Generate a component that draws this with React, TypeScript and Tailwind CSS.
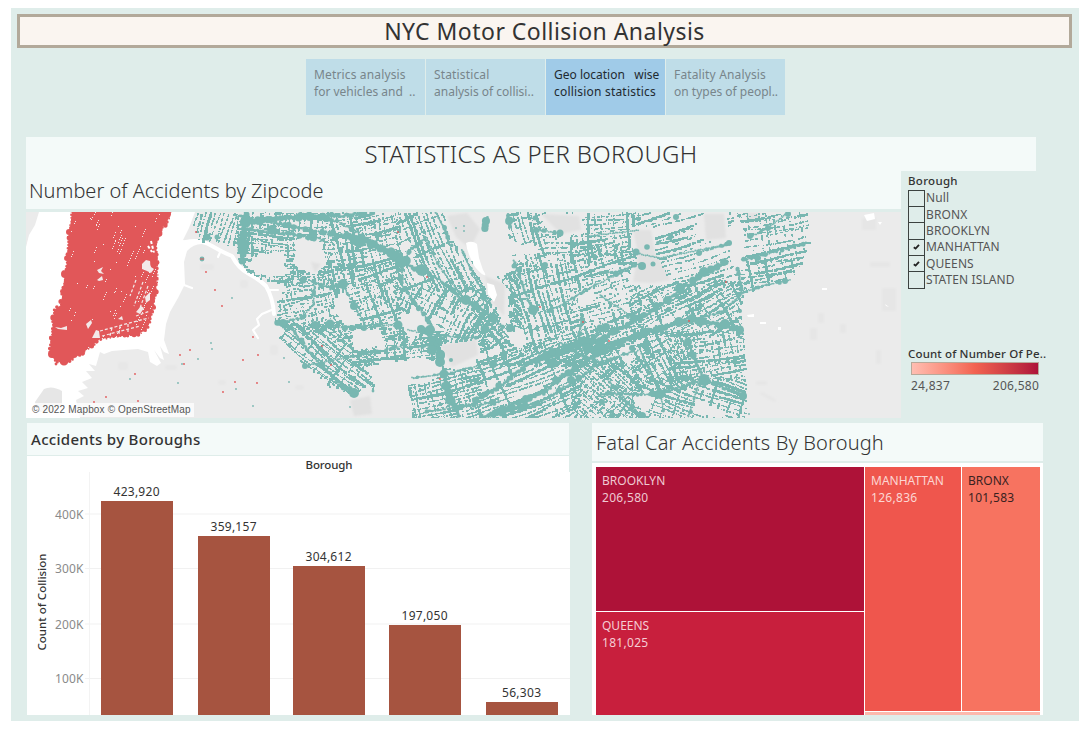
import React from "react";

type Pt = [number, number];

/* ---------- deterministic street / collision generator ---------- */
let seed = 7;
const rnd = () => {
  seed = (seed * 1664525 + 1013904223) % 4294967296;
  return seed / 4294967296;
};

const parse = (s: string): Pt[] =>
  s.split(" ").map((p) => p.split(",").map(Number) as Pt);

const inside = (poly: Pt[], x: number, y: number) => {
  let c = false;
  for (let i = 0, j = poly.length - 1; i < poly.length; j = i++) {
    const [xi, yi] = poly[i];
    const [xj, yj] = poly[j];
    if (yi > y !== yj > y && x < ((xj - xi) * (y - yi)) / (yj - yi) + xi) c = !c;
  }
  return c;
};

const QUEENS = parse(
  "194,212 807,212 809,243 800,265 793,279 765,285 743,294 739,310 743,330 744,350 746,400 747,418 412,418 410,400 407,385 430,380 442,372 437,362 425,357 395,360 366,366 371,378 374,391 365,382 357,395 345,393 330,387 305,366 279,337 285,325 274,322 277,305 275,298 285,290 283,283 260,278 248,272 240,262 232,250 225,243 205,240 190,240"
);

const HOLES = [
  "246,264 256,254 275,251 287,256 283,264 291,273 270,276 255,273",
  "293,240 308,235 318,240 327,261 315,274 302,270 291,262 296,250",
  "332,297 343,291 350,305 362,323 345,325 335,312",
  "350,329 380,328 384,345 353,350",
  "403,314 412,306 428,320 431,326 417,335 407,336 400,324",
  "440,344 477,338 480,354 463,362 450,369 442,362 438,348",
  "443,212 483,212 480,232 500,232 520,244 535,245 538,253 511,254 513,270 497,276 508,290 508,314 500,318 492,302 480,280 470,258 458,248 448,235",
  "542,213 580,214 582,230 572,234 562,243 560,231 545,228",
  "507,332 522,328 527,342 518,348 508,340",
  "577,295 592,288 594,298 580,307",
  "632,226 653,226 655,250 662,270 673,283 655,285 632,285 628,278 636,255 630,240",
  "704,214 726,212 728,235 718,243 702,238 690,230",
  "735,212 742,225 745,262 738,270 730,262 728,230",
  "632,395 645,390 655,397 645,412 633,402",
  "620,346 645,335 643,342 630,346 630,368 620,355",
  "694,402 700,400 728,413 720,418 692,411",
].map(parse);

interface District {
  box: [number, number, number, number];
  angle: number;
  gap: number;
  fill: number;
  cross?: number;
}

const DISTRICTS: District[] = [
  { box: [188, 212, 238, 245], angle: 108, gap: 4.2, fill: 0.84 },
  { box: [236, 212, 330, 285], angle: 4, gap: 3.4, fill: 0.76, cross: 5 },
  { box: [272, 262, 330, 330], angle: -12, gap: 3.5, fill: 0.56, cross: 4.4 },
  { box: [272, 322, 376, 398], angle: 39, gap: 3.4, fill: 0.88, cross: 9 },
  { box: [330, 212, 400, 270], angle: -12, gap: 3.6, fill: 0.62, cross: 4.5 },
  { box: [330, 262, 400, 340], angle: -18, gap: 3.4, fill: 0.52, cross: 4.4 },
  { box: [350, 330, 445, 368], angle: -7, gap: 3.3, fill: 0.8, cross: 9 },
  { box: [395, 212, 475, 290], angle: 66, gap: 4.2, fill: 0.84, cross: 11 },
  { box: [395, 284, 500, 345], angle: 118, gap: 4.5, fill: 0.78, cross: 9 },
  { box: [470, 260, 520, 345], angle: 50, gap: 4.2, fill: 0.78, cross: 6 },
  { box: [508, 212, 545, 270], angle: 73, gap: 4.6, fill: 0.78, cross: 8 },
  { box: [545, 212, 640, 262], angle: -3, gap: 4.2, fill: 0.65, cross: 7 },
  { box: [508, 262, 570, 330], angle: 75, gap: 4.4, fill: 0.82, cross: 8 },
  { box: [570, 240, 640, 326], angle: -17, gap: 4.4, fill: 0.58, cross: 7 },
  { box: [630, 212, 735, 285], angle: -17, gap: 4.6, fill: 0.64 },
  { box: [735, 212, 812, 295], angle: -10, gap: 3.7, fill: 0.66, cross: 8 },
  { box: [630, 280, 748, 335], angle: -28, gap: 3.5, fill: 0.7, cross: 7 },
  { box: [405, 368, 480, 420], angle: -13, gap: 3.7, fill: 0.78, cross: 5 },
  { box: [475, 342, 580, 420], angle: -22, gap: 3.9, fill: 0.88, cross: 12 },
  { box: [500, 325, 660, 365], angle: -20, gap: 3.6, fill: 0.78, cross: 5.5 },
  { box: [570, 360, 640, 420], angle: 42, gap: 3.5, fill: 0.78, cross: 5.5 },
  { box: [630, 330, 690, 390], angle: 60, gap: 4.2, fill: 0.82, cross: 8 },
  { box: [668, 330, 748, 380], angle: -8, gap: 3.7, fill: 0.74, cross: 6 },
  { box: [630, 376, 748, 420], angle: 20, gap: 3.9, fill: 0.8, cross: 10 },
];

const sweep = (d: District, angle: number, gap: number, fill: number) => {
  const [x0, y0, x1, y1] = d.box;
  const cx = (x0 + x1) / 2;
  const cy = (y0 + y1) / 2;
  const r = Math.hypot(x1 - x0, y1 - y0) / 2;
  const ux = Math.cos((angle * Math.PI) / 180);
  const uy = Math.sin((angle * Math.PI) / 180);
  let out = "";
  for (let o = -r; o < r; o += gap * (0.8 + rnd() * 0.4)) {
    const phase = rnd() * 60;
    let strong = rnd() < 0.15;
    let absent = false;
    for (let t = -r; t < r; t += 1.7) {
      if (rnd() < 0.05) {
        strong = rnd() < 0.2;
        absent = rnd() < 0.14;
      }
      if (absent) continue;
      const wob = Math.sin((t + phase) / 17) * 1.3;
      const x = cx + ux * t - uy * (o + wob);
      const y = cy + uy * t + ux * (o + wob);
      if (rnd() > (strong ? 0.95 : fill)) continue;
      if (x < x0 || x > x1 || y < y0 || y > y1) continue;
      if (!inside(QUEENS, x, y) || HOLES.some((h) => inside(h, x, y))) continue;
      const s = strong ? 1.9 + rnd() * 1.2 : 1.2 + rnd() * 0.7;
      out += `M${x.toFixed(1)} ${y.toFixed(1)}h${s.toFixed(1)}v${s.toFixed(1)}h-${s.toFixed(1)}z`;
    }
  }
  return out;
};

const streets = DISTRICTS.map(
  (d) =>
    sweep(d, d.angle, d.gap, d.fill) +
    (d.cross ? sweep(d, d.angle + 90, d.cross, d.fill * 0.85) : "")
).join("");

const ARTERIES: [string, number][] = [
  ["236,216 270,222 320,232 345,236 370,242", 5],
  ["345,236 370,242 390,252 405,262 420,270", 8],
  ["300,214 340,222 370,240 400,256", 4],
  ["246,214 243,238 243,260", 9],
  ["250,222 285,218 330,216 375,214", 6],
  ["248,230 290,234 325,240", 5],
  ["420,268 440,280 462,299 478,307 490,317 504,328", 5],
  ["402,262 402,284 414,302 428,320 436,333", 4],
  ["436,212 446,232 452,246", 4],
  ["462,250 472,272 482,290 492,306", 3],
  ["424,240 410,250 405,260", 4],
  ["424,236 440,268 462,296", 3],
  ["425,330 436,344 441,362", 8],
  ["408,330 440,336 478,338", 3],
  ["443,372 450,396 460,418", 6],
  ["310,326 345,327 400,325", 3],
  ["310,365 345,358 400,347 432,346", 3],
  ["277,323 292,329 318,362 345,388 354,392", 5],
  ["342,284 354,306 366,326", 3],
  ["311,282 330,288 343,284", 4],
  ["315,282 313,305 302,318 282,322", 4],
  ["475,400 500,386 530,362 552,352 600,340 640,318 670,298 705,272 728,261", 6],
  ["480,418 545,392 560,378 600,352 640,333 690,320 720,325 742,330", 6],
  ["500,412 540,402 580,378 600,362", 5],
  ["535,362 560,352 600,334", 8],
  ["412,378 443,374 480,366", 3],
  ["425,412 450,408 500,402", 4],
  ["490,416 515,406", 7],
  ["548,312 590,288 630,268", 3],
  ["514,260 528,300 534,312", 4],
  ["590,236 640,230", 2],
  ["536,230 560,233", 3],
  ["487,218 484,230", 6],
  ["508,214 510,230", 6],
  ["600,272 616,272 640,264", 3],
  ["600,295 634,318", 2],
  ["686,336 694,358 704,379 725,388 745,396", 5],
  ["704,379 660,394 600,394", 4],
  ["608,380 622,396 640,416", 4],
  ["640,350 660,392 664,412", 3],
  ["688,418 700,380", 3],
  ["742,293 765,285 792,279", 3],
  ["742,260 775,252 808,243", 4],
  ["750,237 768,228 788,213", 3],
  ["700,252 728,244", 3],
  ["640,254 660,258 690,252 728,244", 2],
  ["738,270 742,293 722,312 700,318", 4],
  ["582,318 575,360 570,380", 4],
  ["560,342 575,352 600,362 640,350", 4],
];

const disc = (x: number, y: number, r: number) =>
  `M${(x - r).toFixed(1)} ${y.toFixed(1)}a${r.toFixed(1)} ${r.toFixed(1)} 0 1 0 ${(2 * r).toFixed(1)} 0a${r.toFixed(1)} ${r.toFixed(1)} 0 1 0 -${(2 * r).toFixed(1)} 0`;

/* arterial roads: overlapping discs of uneven size along each line */
const arteries = ARTERIES.map(([line, w]) => {
  const pts = parse(line);
  let out = "";
  for (let i = 0; i < pts.length - 1; i++) {
    const [xa, ya] = pts[i];
    const [xb, yb] = pts[i + 1];
    const n = Math.ceil(Math.hypot(xb - xa, yb - ya) / 1.9);
    for (let k = 0; k < n; k++) {
      const big = rnd() < 0.14;
      const r = (w / 2) * (big ? 0.9 + rnd() * 0.45 : 0.35 + rnd() * 0.4);
      const j = w * 0.22;
      out += disc(
        xa + ((xb - xa) * k) / n + (rnd() - 0.5) * j,
        ya + ((yb - ya) * k) / n + (rnd() - 0.5) * j * 2,
        Math.max(r, 0.9)
      );
    }
  }
  return out;
}).join("");

const NODES: [number, number, number][] = [
  [202, 259, 2.4], [354, 393, 5], [354, 306, 4], [343, 284, 5], [398, 325, 4.5], [345, 328, 3],
  [352, 328, 3], [364, 328, 3], [330, 324, 4.5], [315, 325, 4], [560, 233, 3.5], [536, 230, 3], [510, 328, 4],
  [533, 310, 5], [642, 266, 4], [636, 252, 3.5], [647, 247, 2.8], [653, 264, 2.5], [658, 243, 2], [704, 272, 5],
  [729, 243, 3], [699, 253, 3], [676, 217, 3], [670, 238, 2.5], [616, 274, 3], [451, 360, 2], [444, 374, 4.5],
  [660, 394, 5], [704, 380, 6], [743, 396, 4], [688, 342, 4], [740, 329, 3.5], [606, 327, 4],
  [634, 318, 4], [750, 236, 3], [758, 258, 3], [788, 214, 3], [768, 228, 3], [514, 266, 2.5],
  [484, 298, 3], [485, 329, 4.5], [421, 329, 4], [430, 330, 5], [401, 262, 6], [422, 270, 6], [466, 300, 5],
  [475, 305, 4], [493, 318, 5], [493, 364, 4], [432, 350, 5], [440, 362, 5], [450, 400, 5], [445, 386, 4],
  [600, 328, 3.5], [242, 261, 3.4], [207, 237, 3.5], [217, 237, 2.5], [303, 280, 3.5], [283, 323, 4],
  [740, 311, 2], [785, 281, 3], [777, 282, 2], [691, 412, 2], [632, 348, 3], [628, 317, 2],
  [305, 366, 3], [373, 391, 1.4], [535, 218, 2.5], [545, 265, 3], [602, 402, 3], [612, 416, 3], [642, 416, 4],
  [552, 352, 4], [600, 345, 5], [587, 348, 5], [553, 363, 5], [571, 380, 4], [313, 234, 4], [272, 230, 5],
  [680, 288, 5], [668, 300, 4], [725, 324, 5], [692, 318, 4], [679, 322, 5],
];

const MANHATTAN = parse(
  "72,212 171,212 167,222 160,230 156,242 157,262 157,275 156,292 153,308 150,322 146,330 138,334 100,339 88,349 70,361 64,363 55,361 50,352 52,332 54,310 61,305 64,280 67,262 69,235"
);

/* ragged shoreline of points round Manhattan */
const shore = (() => {
  let out = "";
  MANHATTAN.forEach(([x, y], i) => {
    const [x2, y2] = MANHATTAN[(i + 1) % MANHATTAN.length];
    const n = Math.max(1, Math.round(Math.hypot(x2 - x, y2 - y) / 3.5));
    for (let k = 0; k < n; k++) {
      const r = 0.8 + rnd() * rnd() * 2.6;
      out += disc(x + ((x2 - x) * k) / n + rnd() * 1.6 - 0.8, y + ((y2 - y) * k) / n + rnd() * 1.6 - 0.8, r);
    }
  });
  return out + disc(65, 274, 4) + disc(69, 232, 3) + disc(52, 354, 4) + disc(64, 361, 4.5) + disc(168, 214, 3);
})();

/* gaps between points: rows aligned to the avenue direction */
const gaps = (() => {
  let out = "";
  const ux = 0.42;
  const uy = -0.91;
  for (let i = 0; i < 90; i++) {
    let x = 66 + rnd() * 92;
    let y = 214 + rnd() * 136;
    if (x < 125 && y > 262 && rnd() < 0.55) continue;
    const n = 1 + Math.floor(rnd() * (x > 120 ? 8 : 4));
    for (let k = 0; k < n; k++) {
      if (inside(MANHATTAN, x, y)) out += `M${x.toFixed(1)} ${y.toFixed(1)}h0.9v1h-0.9z`;
      x += ux * 2.6;
      y += uy * 2.6;
    }
  }
  return out;
})();

const RED_DOTS: Pt[] = [
  [196, 232], [206, 272], [215, 290], [222, 306], [253, 337], [180, 355], [190, 350], [184, 364], [135, 374],
  [106, 397], [138, 401], [94, 402], [243, 360], [258, 355], [235, 382], [257, 383], [223, 392], [398, 232],
  [427, 277], [540, 307], [583, 322], [440, 379], [322, 346], [331, 365], [726, 282], [689, 321], [609, 341],
];
const TEAL_DOTS: Pt[] = [
  [232, 298], [211, 343], [212, 349], [198, 359], [130, 379], [178, 383], [284, 358], [289, 382], [236, 389],
  [253, 406], [182, 364], [248, 272], [456, 228], [464, 231], [464, 226], [367, 381], [350, 407], [749, 414],
];

const points = (s: Pt[]) => s.map((p) => p.join(",")).join(" ");

const CollisionMap = () => (
  <svg className="block h-[206px] w-[875px]" viewBox="26 212 875 206" aria-label="Collision map">
    <defs>
      <filter id="soft" x="-20%" y="-20%" width="140%" height="140%">
        <feGaussianBlur stdDeviation="1.2" />
      </filter>
    </defs>
    <rect x="26" y="212" width="875" height="206" fill="#ebebeb" />
    <path
      d="M39 212H195L189 228 183 240 192 241Q202 239 210 243L204 244Q194 243 187 251L184 262 185 284 178 298 170 312 166 324 164 340 169 354 164 352 160 346 164 360 160 358 154 350 161 363 157 366 150 362 148 352 138 349 124 350 112 351 104 354 100 352 96 366 89 364 95 371 86 371 92 378 82 382 88 388 78 391 84 396 76 400 80 418H26V247L29 235 35 225Z"
      fill="#fff"
    />
    <path d="M35 402L44 389Q52 385 62 391L62 404 54 412H37Z" fill="#e6e6e6" />
    <g fill="none" stroke="#fff" strokeLinecap="round" strokeLinejoin="round">
      <path d="M186 242Q200 239 212 246T232 256Q238 268 249 274T266 286Q273 298 274 314" strokeWidth="4" />
      <path d="M221 250L218 257M184 285L192 288M268 290L278 290M274 309L262 314 257 319 259 325 253 330 258 338" strokeWidth="2.2" />
    </g>
    <g filter="url(#soft)" fill="#e1e1e1">
      <path d="M447 216l20-3 13 16-10 20-14-12zM485 276l20 8-1 32-12-14zM541 214l38 2 2 14-20 4zM440 345l36-6 2 16-26 12zM633 230h18l4 22 16 28-18 3-20-1 5-28zM704 214h20l2 24-20 2zM745 213h14l2 8-12 2zM350 400l20-4 2 18-18 2zM311 262l10 2-6 9z" />
      <path d="M882 288h14v23h-14zM810 328h7v12h-7zM840 324h6v9h-6zM876 350h5v14h-5zM818 313h6v10h-6zM870 262h20v5h-20zM862 218h14v12h-14zM762 392l15 8-3 2-14-8zM756 381h11v4h-11z" fill="#e6e6e6" />
      <path d="M200 264h14v6h-14zM240 280h8v8h-8zM165 365h12v5h-12zM270 345h8v10h-8zM118 362h10v8h-10zM218 380h8v5h-8zM295 385h9v5h-9z" fill="#e7e7e7" />
    </g>
    <g fill="#fff">
      <path d="M466 243q6-3 11 1l2 14 4 12q4 6 1 5t-9-8q-8-14-9-24zM487 283l7 2 3 10-3 7-6-8zM864 215l10-2 1 6-8 2zM747 315l7-1v3h-6zM760 322h6v2h-6zM778 327h3v3h-3zM822 288h5v2h-5zM885 304l4 3-3-1zM878 222h4l-2 3z" />
    </g>
    <g fill="#78b7b1">
      <path d={streets} shapeRendering="crispEdges" />
      <path d={arteries} />
      {NODES.map(([x, y, r]) => (
        <circle key={`${x}-${y}`} cx={x} cy={y} r={r} />
      ))}
      {TEAL_DOTS.map(([x, y]) => (
        <circle key={`${x}-${y}`} cx={x} cy={y} r="0.9" />
      ))}
    </g>
    <path d={shore} fill="#e15759" />
    <polygon points={points(MANHATTAN)} fill="#e15759" />
    <g fill="#f3e9e9">
      <path d={gaps} shapeRendering="crispEdges" />
      <path d="M142 264l4-4 4 1 1 6 3 2-3 4-4-2-5-2zM97 270l6-3-2 4 3 3-5-1zM97 280l5-4 1 4-4 1zM92 338l4-8 3 1 1 7zM136 312l5-6 3 2-4 6zM145 297l5-5 0 8-4 3zM118 319l4-3 1 4zM86 324l5-4 1 3-4 6zM55 327l6 1 6-2 0 4-9-1z" />
    </g>
    <g stroke="#f3e9e9" strokeWidth="1.2" strokeDasharray="3 2">
      <path d="M102 336l38-10M100 331l44-12M148 286l-8 22M143 282l-9 24M136 316l14-5M134 322l15-4M112 328l-2 8M120 326l-1 8M128 324v8M136 280l-6 16" fill="none" />
      <path d="M151 241l3 12M148 246l4 6" fill="none" stroke="#fff" strokeWidth="2" />
    </g>
    <g fill="#e15759">
      {RED_DOTS.map(([x, y]) => (
        <circle key={`${x}-${y}`} cx={x} cy={y} r="0.9" />
      ))}
      <circle cx="154" cy="256" r="3.6" />
      <circle cx="154" cy="264" r="3.6" />
      <circle cx="56" cy="364" r="1.4" />
      <path d="M200 258.5h4v1h-4z" />
    </g>
    <rect x="27" y="403" width="167" height="14" fill="#fff" fillOpacity="0.75" />
    <text x="32" y="413" fontFamily="'Liberation Sans', Arial, sans-serif" fontSize="10" fill="#555" textLength="158.500">
      © 2022 Mapbox © OpenStreetMap
    </text>
  </svg>
);

/* ---------- bar chart ---------- */
const BARS = [
  { x: 101, y: 501, label: "423,920" },
  { x: 198, y: 536, label: "359,157" },
  { x: 293, y: 566, label: "304,612" },
  { x: 389, y: 625, label: "197,050" },
  { x: 486, y: 702, label: "56,303" },
];
const TICKS = [
  { y: 514, label: "400K" },
  { y: 568.5, label: "300K" },
  { y: 624, label: "200K" },
  { y: 678.5, label: "100K" },
];

const BarChart = () => (
  <svg className="block h-[259px] w-[543px]" viewBox="27 456 543 259" fontFamily="'Noto Sans', sans-serif" fontSize="12">
    <rect x="27" y="456" width="543" height="259" fill="#fff" />
    <rect x="569" y="456" width="1" height="16" fill="#dfedea" />
    <text x="329" y="469" textAnchor="middle" fill="#333" textLength="47" fontSize="11.500" fontWeight="500">Borough</text>
    <rect x="89" y="472" width="1" height="243" fill="#f3f3f3" />
    {TICKS.map((t) => (
      <g key={t.label}>
        <rect x="85" y={t.y - 0.5} width="485" height="1" fill="#f1f1f1" />
        <text x="55" y={t.y + 4.5} fill="#8a8a8a" textLength="28.500">{t.label}</text>
      </g>
    ))}
    {BARS.map((b) => (
      <g key={b.label}>
        <rect x={b.x} y={b.y} width="72" height={715 - b.y} fill="#a65440" />
        <text x={b.x + 35.5} y={b.y - 5} textAnchor="middle" fill="#333" textLength={b.label.length > 6 ? 46 : 39}>
          {b.label}
        </text>
      </g>
    ))}
    <text transform="translate(46 602) rotate(-90)" textAnchor="middle" fill="#333" fontSize="11.500" fontWeight="500" textLength="97">
      Count of Collision
    </text>
  </svg>
);

/* ---------- controls ---------- */
const TABS = [
  { lines: ["Metrics analysis", "for vehicles and  .."], active: false },
  { lines: ["Statistical", "analysis of collisi.."], active: false },
  { lines: ["Geo location   wise", "collision statistics"], active: true },
  { lines: ["Fatality Analysis", "on types of peopl.."], active: false },
];

const BOROUGHS = [
  { name: "Null", on: false },
  { name: "BRONX", on: false },
  { name: "BROOKLYN", on: false },
  { name: "MANHATTAN", on: true },
  { name: "QUEENS", on: true },
  { name: "STATEN ISLAND", on: false },
];

const Filter = () => (
  <aside className="flex w-[160px] flex-col pl-[7px] text-[12px] text-[#555]">
    <h3 className="h-[19px] pt-px text-[11.5px] font-medium leading-[17px] tracking-[0.3px] text-[#333]">Borough</h3>
    <ul className="flex w-[150px] flex-col">
      {BOROUGHS.map((b) => (
        <li key={b.name} className="flex h-[16.4px] items-center gap-px whitespace-nowrap">
          <span className="flex h-[17.4px] w-[17px] shrink-0 items-center justify-center border border-[#3c4240]">
            {b.on && (
              <svg width="7" height="6" viewBox="0 0 7 6" fill="none" stroke="#222" strokeWidth="1.8">
                <path d="M0.800 3.200L2.600 4.600 6 0.800" />
              </svg>
            )}
          </span>
          <span className="tracking-[0.1px]">{b.name}</span>
        </li>
      ))}
    </ul>
    <h3 className="mt-[57px] whitespace-nowrap text-[11.5px] font-medium leading-[17px] tracking-[0.15px] text-[#333]">
      Count of Number Of Pe..
    </h3>
    <div className="ml-[3px] h-[13px] w-[128px] border border-[#b8a99a] bg-linear-to-r from-[#ffbeb2] via-[#f26250] to-[#ae123a]" />
    <div className="ml-[3px] flex w-[128px] justify-between pt-px leading-[20px] tracking-[0.25px]">
      <span>24,837</span>
      <span>206,580</span>
    </div>
  </aside>
);

const Tile = ({ name, value, className }: { name: string; value: string; className: string }) => (
  <div className={`pl-[6px] pt-[5px] text-[12px] leading-[17px] ${className}`}>
    <div>{name}</div>
    <div className="tracking-[0.3px]">{value}</div>
  </div>
);

export default function App() {
  return (
    <div className="h-[732px] w-[1092px] overflow-hidden bg-white pl-[11px] pt-2 font-['Noto_Sans',sans-serif] text-[#333]">
      <main className="flex h-[713px] w-[1068px] flex-col bg-[#dfedea] pt-[6px]">
        <h1 className="ml-[6px] flex h-[34px] w-[1055px] items-center justify-center border-[3px] border-[#b2a99a] bg-[#faf5f0] text-[23px] tracking-[0.46px]">
          NYC Motor Collision Analysis
        </h1>
        <nav className="ml-[295px] mt-[11px] flex h-14 gap-px">
          {TABS.map((t) => (
            <button
              key={t.lines[0]}
              className={`flex w-[119px] flex-col items-start whitespace-pre pl-2 pt-[7px] text-[12px] leading-[17px] ${
                t.active ? "bg-[#a0cbe8] text-[#1f2a30]" : "bg-[#bfdde8] text-[#78858b]"
              }`}
            >
              <span className={t.active ? "" : "tracking-[0.15px]"}>{t.lines[0]}</span>
              <span className={t.active ? "tracking-[0.2px]" : ""}>{t.lines[1]}</span>
            </button>
          ))}
        </nav>
        <h2 className="ml-[15px] mt-[22px] flex h-[34px] w-[1010px] items-center justify-center bg-[#f4faf9] text-[24px] font-[340] tracking-[0.3px]">
          STATISTICS AS PER BOROUGH
        </h2>
        <div className="ml-[15px] flex h-[252px]">
          <section className="w-[875px]">
            <h2 className="mb-[3px] flex h-[38px] items-center bg-[#f4faf9] pl-[3px] pt-[2px] text-[20px] font-[340]">
              Number of Accidents by Zipcode
            </h2>
            <CollisionMap />
          </section>
          <Filter />
        </div>
        <div className="ml-4 flex h-[292px] gap-[22px]">
          <section className="w-[543px]">
            <h2 className="flex h-8 w-[542px] items-center bg-[#f4faf9] pl-1 text-[15px] font-medium tracking-[0.3px]">
              Accidents by Boroughs
            </h2>
            <div className="h-px" />
            <BarChart />
          </section>
          <section className="w-[451px]">
            <h2 className="flex h-[38px] items-center bg-[#f4faf9] pl-1 pt-[2px] text-[20px] font-[340] tracking-[0.15px]">
              Fatal Car Accidents By Borough
            </h2>
            <div className="mt-[2px] flex h-[252px] gap-px bg-white pl-1 pt-1">
              <div className="flex w-[268px] flex-col gap-[1px]">
                <Tile name="BROOKLYN" value="206,580" className="h-[144px] bg-[#ae1238] text-[#efc9d2]" />
                <Tile name="QUEENS" value="181,025" className="flex-1 bg-[#c81f3d] text-[#f5cdd4]" />
              </div>
              <div className="flex w-[175px] flex-col gap-px">
                <div className="flex h-[244px] gap-px">
                  <Tile name="MANHATTAN" value="126,836" className="w-[96px] bg-[#ef564d] text-[#fcd6d3]" />
                  <Tile name="BRONX" value="101,583" className="w-[78px] bg-[#f77360] text-[#3a2220]" />
                </div>
                <div className="flex-1 bg-[#fdb9ad]" />
              </div>
            </div>
          </section>
        </div>
      </main>
    </div>
  );
}
